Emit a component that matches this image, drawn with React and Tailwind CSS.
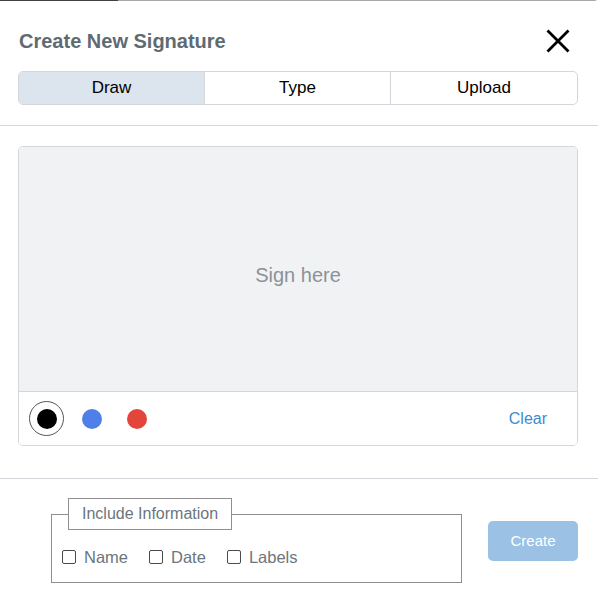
import React from "react";

const F = { fontFamily: '"Liberation Sans", Arial, sans-serif' };

function Check({ label }) {
  return (
    <label className="flex items-center">
      <span className="w-[14px] h-[14px] border border-[#4a4a4a] rounded-[2px] bg-white" />
      <span className="ml-[8px] text-[16.5px] leading-[20px] text-[#6c757d]">{label}</span>
    </label>
  );
}

export default function App() {
  return (
    <div style={F} className="w-[598px] h-[613px] bg-white overflow-hidden rounded-tr-[4px] relative">
      <div className="flex h-px">
        <div className="w-[118px] bg-[#3f4144]" />
        <div className="flex-1 bg-[#a5a8ab]" />
      </div>
      <div className="pl-[18px] pr-[20px] pt-[27px] pb-[20px]">
        <div className="flex items-center justify-between h-[26px] pl-[1px]">
          <h2 className="text-[20px] font-bold text-[#5f6b72] leading-[26px]">Create New Signature</h2>
          <svg width="24" height="24" viewBox="0 0 24 24" className="mr-[8px]">
            <path d="M1.5 1.5 L22.5 22.5 M22.5 1.5 L1.5 22.5" stroke="#000" strokeWidth="2.8" fill="none" />
          </svg>
        </div>
        <div className="mt-[17px] grid grid-cols-3 h-[34px] border border-[#d3d7dc] rounded-[5px] overflow-hidden text-[17px] text-black">
          <div className="flex items-center justify-center bg-[#dce4ed] border-r border-[#d3d7dc]">Draw</div>
          <div className="flex items-center justify-center border-r border-[#d3d7dc]">Type</div>
          <div className="flex items-center justify-center">Upload</div>
        </div>
      </div>
      <div className="h-px bg-[#d3d7dc]" />
      <div className="pl-[18px] pr-[20px] pt-[20px] pb-[32px]">
        <div className="border border-[#d3d7dc] rounded-[5px] overflow-hidden">
          <div className="h-[244px] bg-[#f1f2f4] flex items-center justify-center pt-[12px]">
            <span className="text-[20px] text-[#8b9299]">Sign here</span>
          </div>
          <div className="h-[54px] border-t border-[#d3d7dc] bg-white flex items-center pl-[10px] pr-[30px]">
            <div className="w-[35px] h-[35px] rounded-full border border-[#555] flex items-center justify-center">
              <div className="w-[20px] h-[20px] rounded-full bg-black" />
            </div>
            <div className="ml-[18px] w-[20px] h-[20px] rounded-full bg-[#4f7fe9]" />
            <div className="ml-[25px] w-[20px] h-[20px] rounded-full bg-[#e4453a]" />
            <span className="ml-auto text-[16px] text-[#3d8bcf]">Clear</span>
          </div>
        </div>
      </div>
      <div className="h-px bg-[#d3d7dc]" />
      <div className="flex items-center pl-[51px] pr-[20px] pt-[19px]">
        <fieldset className="w-[411px] h-[85px] border border-[#928d92] px-[10px]">
          <legend className="ml-[6px] border border-[#928d92] px-[13px] h-[32px] leading-[30px] text-[16px] text-[#6c757d]">
            Include Information
          </legend>
          <div className="flex items-center gap-[21px] mt-[17px]">
            <Check label="Name" />
            <Check label="Date" />
            <Check label="Labels" />
          </div>
        </fieldset>
        <button className="ml-auto mt-[1px] w-[90px] h-[40px] rounded-[5px] bg-[#9bc1e4] text-white text-[15px]">Create</button>
      </div>
    </div>
  );
}
